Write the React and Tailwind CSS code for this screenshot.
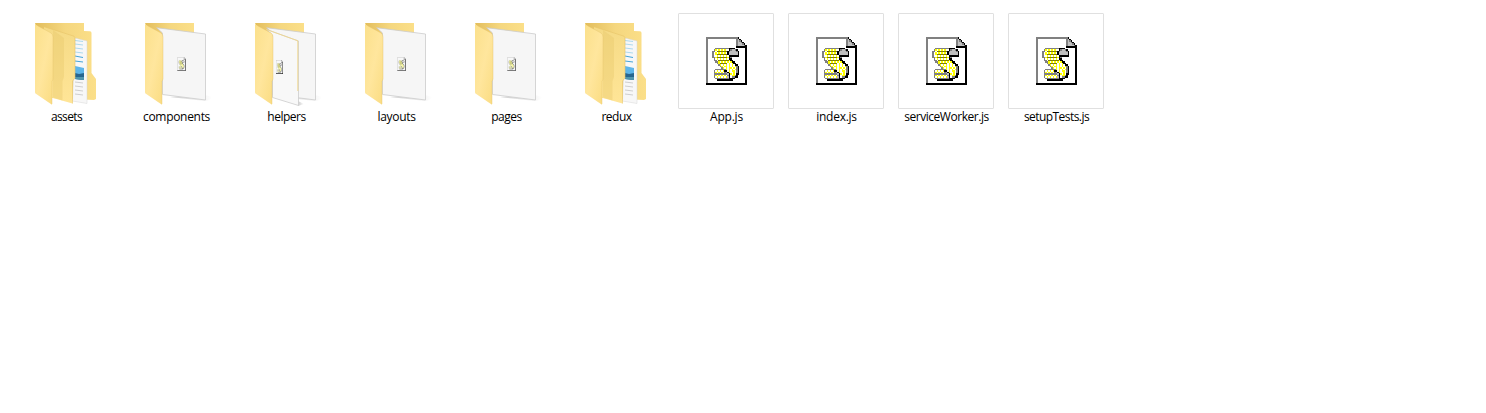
import React, { useId } from 'react';

const MONO = {
  k: '#000000',
  g: '#808080',
  s: '#c0c0c0',
  y: '#ffff00',
  d: '#808000',
};

// 27 x 32 cells
const SCRIPT = [
  'gggggggggggggggggggggk.....',
  'gwwwwwwwwwwwwwwwwwwwgsk....',
  'gwwwwwwwwwwwwwwwwwwwgsgk...',
  'gwwwwwwwwwwwwwwwwwwwgssgk..',
  'gwwwwwwwwwwwwwwwwwwwgsssgk.',
  'gwwwwwwwwwwwwwwwwwwwgssssgk',
  'gwwwwwwwwwwwwwwwwwwwkkkkkkk',
  'gwwwwwgggggggggkkkkwwwwwwwk',
  'gwwwwgywywywywwkgssgkwwwwwk',
  'gwwwggwdddddddkgssssgkwwwwk',
  'gwwwgwywywywywksssssskwwwwk',
  'gwwwgwydddddddksssssskwwwwk',
  'gwwwgwwywywywywkkkkkkkwwwwk',
  'gwwwggydddddddykgwwwwwwwwwk',
  'gwwwwgwywywywywkkwwwwwwwwwk',
  'gwwwwggwdddddddykkwwwwwwwwk',
  'gwwwwwggywywywywykkwwwwwwwk',
  'gwwwwwwgydddddwywykkwwwwwwk',
  'gwwwwwwwgywywywywywkkwwwwwk',
  'gwwwwwwwwgywyywywywygkwwwwk',
  'gwwwwwwwwwgywywyywywgkwwwwk',
  'gwwwwwgggggggywywywygkwwwwk',
  'gwwwwgwywywykkwywyywgkwwwwk',
  'gwwwwgywywywgskywwywgkwwwwk',
  'gwwwwgggggggggskywywkkwwwwk',
  'gwwwwgywywywywgkwyygkwwwwwk',
  'gwwwwgwywywywyskwggkkwwwwwk',
  'gwwwwwgggggggggkkkkwwwwwwwk',
  'gwwwwwwkkkkkkkkkkkwwwwwwwwk',
  'gwwwwwwwwwwwwwwwwwwwwwwwwwk',
  'gwwwwwwwwwwwwwwwwwwwwwwwwwk',
  'kkkkkkkkkkkkkkkkkkkkkkkkkkk',
];

function ScriptGlyph({ smooth, ...props }) {
  return (
    <svg
      viewBox="0 0 27 32"
      preserveAspectRatio="none"
      shapeRendering={smooth ? 'auto' : 'crispEdges'}
      {...props}
    >
      {SCRIPT.map((row, y) =>
        row.split('').map((c, x) =>
          c === '.' ? null : (
            <rect key={x + '-' + y} x={x} y={y} width="1" height="1" fill={MONO[c] || '#ffffff'} />
          ),
        ),
      )}
      <path d="M25.667 5.800H27V32H0V30.667H25.667Z" fill="#000000" />
    </svg>
  );
}

function FolderArt({ kind }) {
  const id = useId();
  const url = (n) => `url(#${id}${n})`;
  return (
    <svg viewBox="0 0 96 96" className="block size-24">
      <defs>
        <linearGradient id={id + 'f'} x1="0" y1="0" x2="1" y2="1">
          <stop offset="0" stopColor="#fbe08b" />
          <stop offset="0.5" stopColor="#ffe69d" />
          <stop offset="1" stopColor="#fadc82" />
        </linearGradient>
        <linearGradient id={id + 'm'} x1="0" y1="0" x2="0" y2="1">
          <stop offset="0" stopColor="#f5da85" />
          <stop offset="1" stopColor="#ffe597" />
        </linearGradient>
        <linearGradient id={id + 'b'} x1="0" y1="0" x2="1" y2="0">
          <stop offset="0" stopColor="#e2bd5c" />
          <stop offset="0.5" stopColor="#f5d77f" />
          <stop offset="1" stopColor="#fbdf89" />
        </linearGradient>
        <linearGradient id={id + 's'} x1="0" y1="0" x2="1" y2="0">
          <stop offset="0" stopColor="#999999" stopOpacity="0.5" />
          <stop offset="1" stopColor="#999999" stopOpacity="0" />
        </linearGradient>
      </defs>
      {kind === 'nested' ? (
        <>
          <path d="M17 10H66V18L72 18.300Q73.500 18.500 73.500 20V60L78 66V86L76 87L34 85Z" fill={url('b')} />
          <path d="M57 25L69 28V90.500L54.500 88Z" fill="#f7f7f7" stroke="#d6d6d6" strokeWidth=".5" />
          <path d="M57 27.500l8 1M57 31l8 1M57 35l8 1M57 39l8 1" stroke="#8ccbea" strokeWidth=".7" />
          <path d="M57 43l8 1.500M57 48l8 1" stroke="#2f9bd6" strokeWidth=".9" />
          <path d="M57 53L66 55V67L57 66Z" fill="#5eb5e9" />
          <path d="M57 60l4 1l5-1V67L57 66Z" fill="#28668f" />
          <path d="M57 64L66 64V67L57 66Z" fill="#5297ae" />
          <path d="M57 69l8 1M57 73l8 1M57 77l8 1M57 81l8 1" stroke="#bcbcbc" strokeWidth=".7" />
          <path d="M26 13.700L55 22.700Q57 23.400 57 25V65L54.500 68V90.500L34 84.700L26 80Z" fill={url('m')} />
          <path d="M35 17L46 25V64L44.500 68V87.500L35 84.500Z" fill="#e6c566" opacity=".35" />
          <path d="M26 13.700L56 23.200Q57 24 57 25V65L54.500 68V90.500" fill="none" stroke="#e7c568" strokeWidth=".6" />
        </>
      ) : (
        <>
          <path d="M77 82L84 84Q83 87 77 88L42 84Z" fill={url('s')} />
          <path d="M17 10H66V40L35 50Z" fill={url('b')} />
          <path d="M28.700 14.700L77.500 21V87L34.500 81.500V20Z" fill="#f6f6f6" stroke="#cccccc" strokeWidth=".8" />
          {kind === 'double' && (
            <>
              <path d="M60 88L66 91L60 93Z" fill={url('s')} />
              <path d="M28.700 16.500L60.500 28V92.500L34.500 84.500V22Z" fill="#f8f8f8" stroke="#cccccc" strokeWidth=".8" />
              <path d="M28 16.300L59.800 27.800V78" fill="none" stroke="#efd68b" strokeWidth=".9" />
            </>
          )}
        </>
      )}
      <path d="M17 10Q17 12 20 13L33 20Q35 21.500 35 24V66L34 68.500V91.700L17.500 80.500Q17 80 17 79Z" fill={url('f')} />
      <path d="M20 13L33 20Q35 21.500 35 24V66L34 68.500V91" fill="none" stroke="#e3c269" strokeWidth=".4" />
      {kind !== 'nested' && (
        <g opacity=".9">
          <ScriptGlyph
            smooth
            x={kind === 'double' ? 38 : 49.2}
            y={kind === 'double' ? 47 : 44.2}
            width={kind === 'double' ? 7 : 8.8}
            height={kind === 'double' ? 14 : 13.5}
          />
        </g>
      )}
    </svg>
  );
}

const ITEMS = [
  { name: 'assets', kind: 'nested', tracking: 'tracking-[-0.6px]' },
  { name: 'components', kind: 'single', tracking: 'tracking-[-0.3px]' },
  { name: 'helpers', kind: 'double', tracking: 'tracking-[-0.5px]' },
  { name: 'layouts', kind: 'single', tracking: 'tracking-[-0.3px]' },
  { name: 'pages', kind: 'single', tracking: 'tracking-[-0.5px]' },
  { name: 'redux', kind: 'nested', tracking: 'tracking-[-0.5px]' },
  { name: 'App.js', kind: 'file', tracking: 'tracking-[-0.2px]' },
  { name: 'index.js', kind: 'file', tracking: 'tracking-[-0.25px]' },
  { name: 'serviceWorker.js', kind: 'file', tracking: 'tracking-[-0.45px]' },
  { name: 'setupTests.js', kind: 'file', tracking: 'tracking-[-0.55px]' },
];

export default function App() {
  return (
    <main className="flex h-[413px] w-full items-start gap-3.5 bg-white pt-[13px] pl-[18px] font-['Open_Sans','Noto_Sans',sans-serif] text-xs text-black">
      {ITEMS.map(({ name, kind, tracking }) => (
        <div key={name} className="flex w-24 shrink-0 flex-col items-center">
          {kind === 'file' ? (
            <div className="size-24 rounded-[1px] border border-[#e0e0e0] pt-[23px] pl-[27px]">
              <ScriptGlyph width="41" height="48" className="block" />
            </div>
          ) : (
            <FolderArt kind={kind} />
          )}
          <span className={`pl-px leading-4 whitespace-nowrap ${tracking}`}>{name}</span>
        </div>
      ))}
    </main>
  );
}
